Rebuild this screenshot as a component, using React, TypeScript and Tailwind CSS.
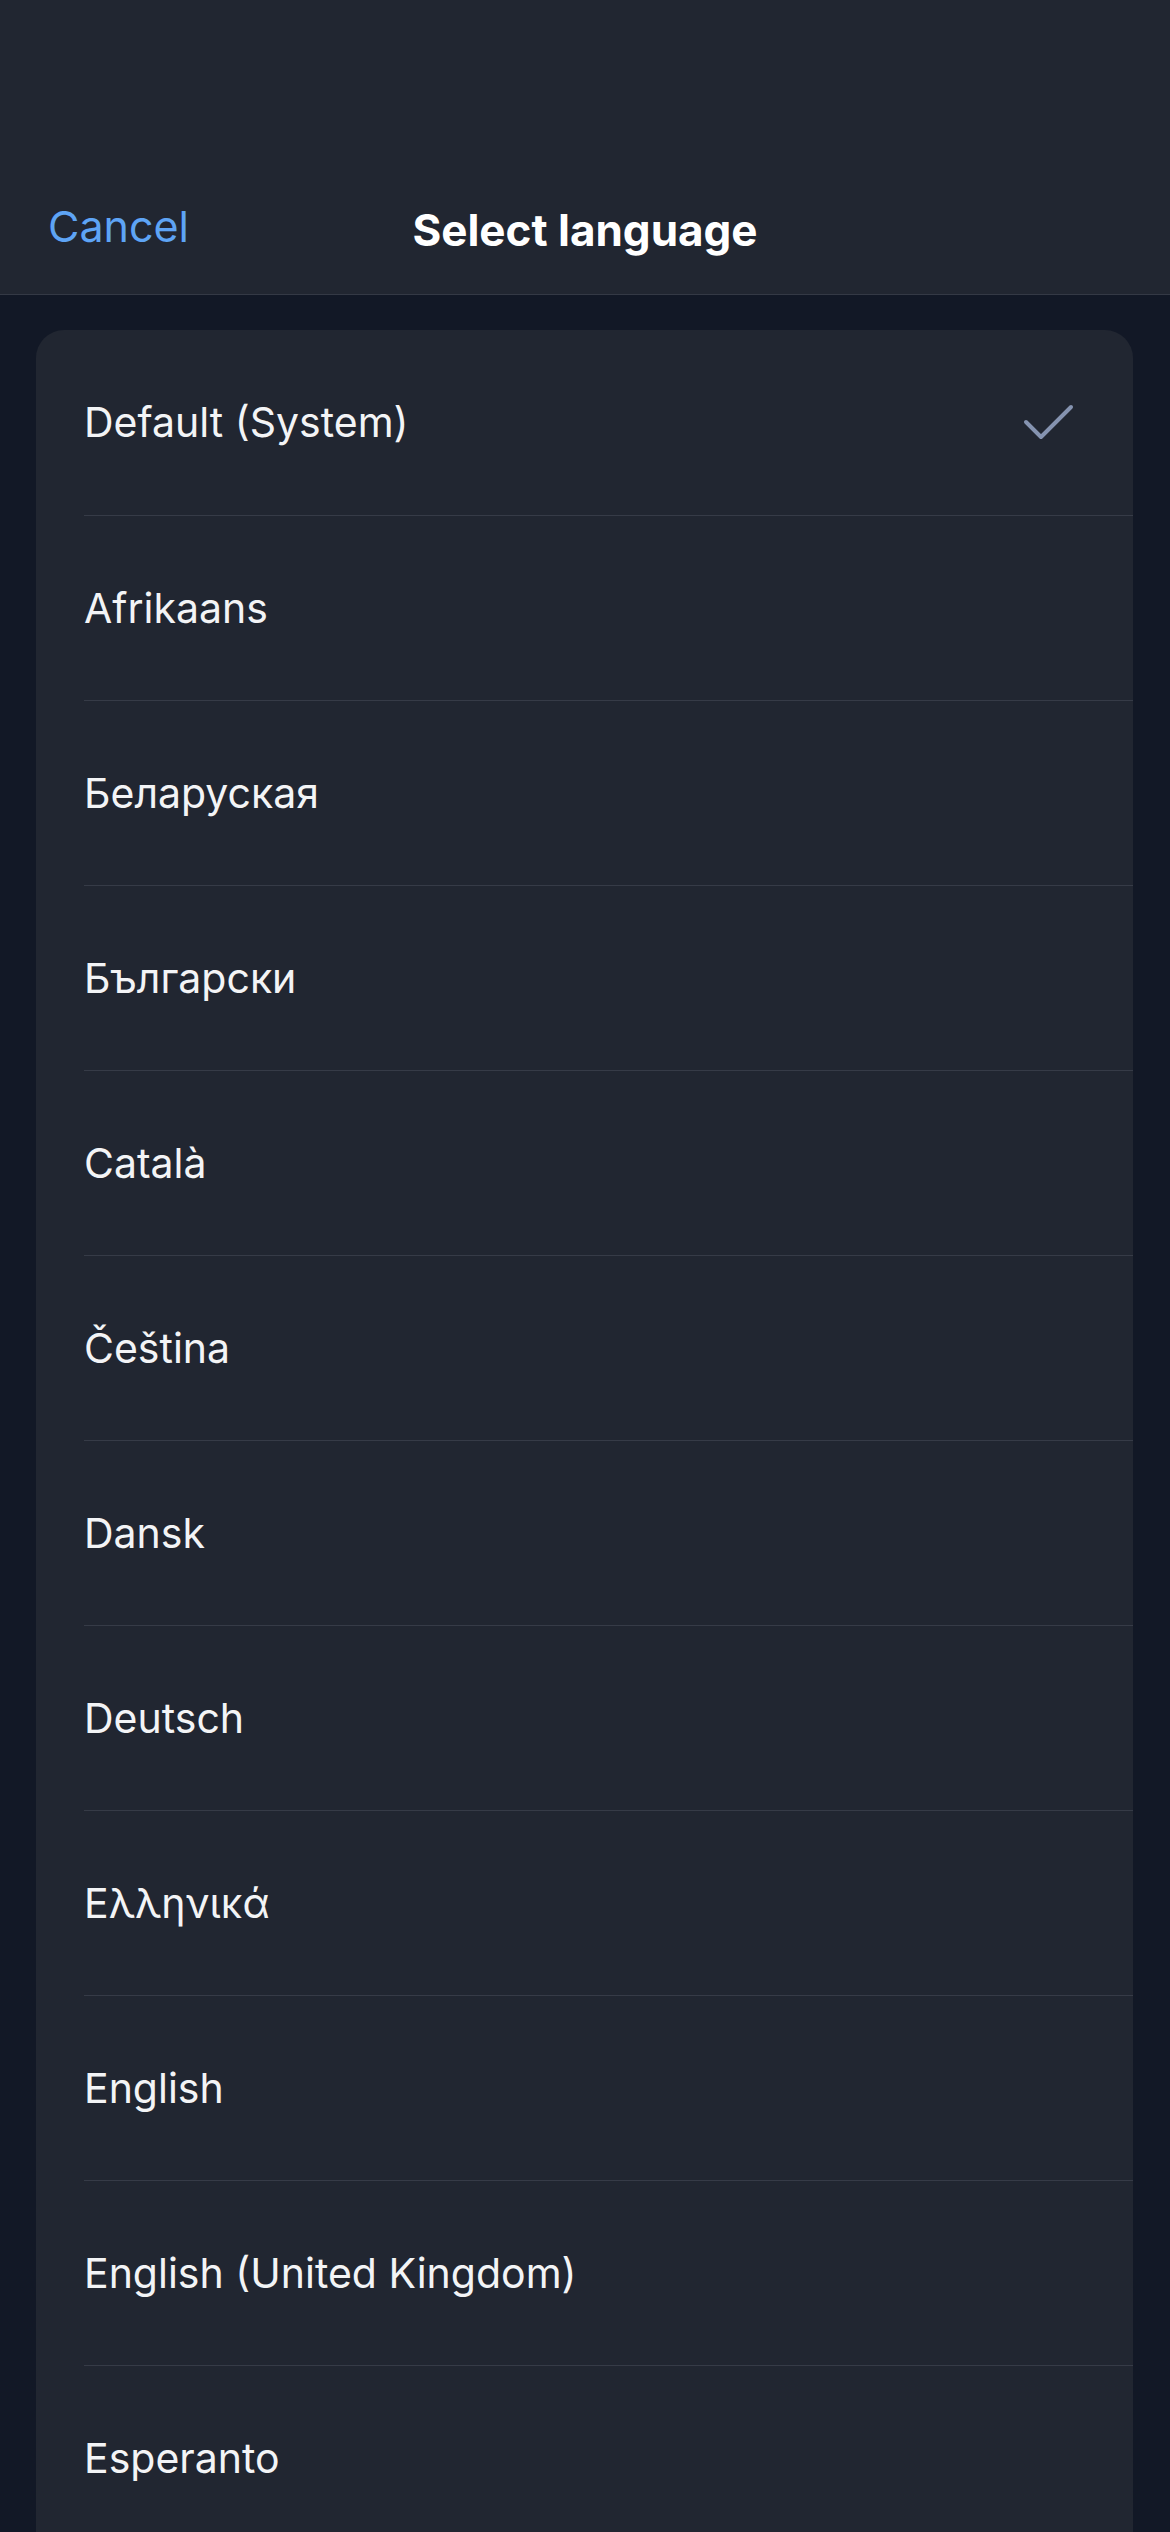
import React from 'react';

const languages = [
  'Default (System)',
  'Afrikaans',
  'Беларуская',
  'Български',
  'Català',
  'Čeština',
  'Dansk',
  'Deutsch',
  'Ελληνικά',
  'English',
  'English (United Kingdom)',
  'Esperanto',
];

function Check() {
  return (
    <svg width="52" height="40" viewBox="0 0 52 40" fill="none">
      <path d="M3 19 L18 34 L48 4" stroke="#8593b0" strokeWidth="4" strokeLinecap="round" strokeLinejoin="round" />
    </svg>
  );
}

export default function App() {
  const selected = 0;
  return (
    <div className="h-[2532px] w-[1170px] overflow-hidden bg-[#121826]" style={{ fontFamily: 'Inter, "Noto Sans", sans-serif' }}>
      {/* Header */}
      <header className="h-[295px] bg-[#212631] border-b border-[#343945] flex items-end pb-[46px] px-[48px] relative">
        <button className="text-[#5ea4f5] text-[43px] leading-none">Cancel</button>
        <h1 className="absolute left-0 right-0 bottom-[42px] text-center text-white text-[44px] font-bold leading-none pointer-events-none">
          Select language
        </h1>
      </header>

      {/* List */}
      <div className="pt-[35px] pl-[36px] pr-[37px]">
        <div className="bg-[#212631] rounded-t-[28px] pl-[48px] pb-[40px]">
          {languages.map((lang, i) => (
            <div
              key={lang}
              className={`h-[185px] flex items-center justify-between pr-[58px] ${i > 0 ? 'border-t border-[#363b47]' : ''}`}
            >
              <span className="text-[#f3f4f6] text-[41px] leading-none">{lang}</span>
              {i === selected && <Check />}
            </div>
          ))}
        </div>
      </div>
    </div>
  );
}
